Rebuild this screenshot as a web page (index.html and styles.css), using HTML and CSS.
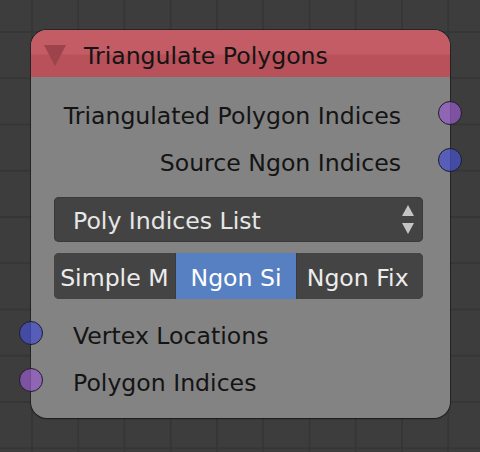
FILE: index.html
```html
<!DOCTYPE html>
<html>
<head>
<meta charset="utf-8">
<link rel="stylesheet" href="styles.css">
</head>
<body>
<div class="canvas">
  <div class="node">
    <div class="header">
      <svg class="collapse" width="24" height="24" viewBox="0 0 24 24"><polygon points="1,2 23,2 12,23" fill="#9c434b"/></svg>
      <span class="title">Triangulate Polygons</span>
    </div>
    <div class="content">
      <div class="row out">
        <span>Triangulated Polygon Indices</span>
        <span class="socket right purple"></span>
      </div>
      <div class="row out">
        <span>Source Ngon Indices</span>
        <span class="socket right blue"></span>
      </div>
      <div class="dropdown">
        <span class="ddlabel">Poly Indices List</span>
        <svg class="updown" width="14" height="32" viewBox="0 0 14 32"><polygon points="7,1 13,12 1,12" fill="#c4c4c4"/><polygon points="1,19 13,19 7,30" fill="#c4c4c4"/></svg>
      </div>
      <div class="segmented">
        <span class="seg">Simple M</span>
        <span class="seg active">Ngon Si</span>
        <span class="seg last">Ngon Fix</span>
      </div>
      <div class="row in">
        <span class="socket left blue"></span>
        <span>Vertex Locations</span>
      </div>
      <div class="row in">
        <span class="socket left purple"></span>
        <span>Polygon Indices</span>
      </div>
    </div>
  </div>
</div>
</body>
</html>
```
FILE: styles.css
```css
html, body {
  margin: 0;
  padding: 0;
}
body {
  width: 480px;
  height: 452px;
  overflow: hidden;
  background-color: #3d3d3d;
  background-image:
    linear-gradient(90deg, #363636 0 2px, transparent 2px),
    linear-gradient(180deg, #363636 0 2px, transparent 2px);
  background-size: 46.25px 46.25px;
  background-position: 31px 31px;
  font-family: "DejaVu Sans", "Liberation Sans", sans-serif;
  font-size: 23.6px;
}
.canvas {
  padding: 30px 0 0 31px;
}
.node {
  width: 419px;
  height: 388px;
  border-radius: 16px;
  background: #838383;
  box-shadow: 0 0 0 1px rgba(0,0,0,0.35), 0 1px 2px rgba(0,0,0,0.3);
  display: flex;
  flex-direction: column;
  position: relative;
}
.header {
  height: 47px;
  border-radius: 16px 16px 0 0;
  background: linear-gradient(180deg, #c35c64 0, #c35c64 24px, #b8515a 25px, #b8515a 100%);
  display: flex;
  align-items: center;
  color: #141414;
}
.collapse {
  margin-left: 12px;
  margin-top: 2px;
}
.title {
  margin-left: 17px;
  margin-top: 5px;
}
.content {
  display: flex;
  flex-direction: column;
  padding-top: 15px;
  color: #141414;
}
.row {
  height: 47px;
  display: flex;
  align-items: center;
  position: relative;
}
.row.out {
  justify-content: flex-end;
  padding-right: 49px;
}
.row.in {
  padding-left: 42px;
}
.socket {
  position: absolute;
  width: 22px;
  height: 22px;
  border-radius: 50%;
  border: 1px solid #1e1e2a;
  top: calc(50% - 15px);
}
.socket.right { right: -12px; }
.socket.left { left: -12px; }
.socket.purple { background: rgba(150, 90, 200, 0.72); }
.socket.blue { background: rgba(70, 80, 205, 0.72); }
.dropdown {
  margin: 11px 27px 0 23px;
  height: 45px;
  background: #434343;
  border-radius: 5px;
  box-shadow: inset 0 0 0 1px #3a3a3a;
  display: flex;
  align-items: center;
  justify-content: space-between;
  color: #e6e6e6;
  padding: 0 8px 0 19px;
}
.ddlabel {
  padding-top: 3px;
}
.updown {
  display: block;
}
.segmented {
  margin: 11px 27px 13px 23px;
  height: 46px;
  display: flex;
  border-radius: 5px;
  overflow: hidden;
  background: #3a3a3a;
  gap: 1px;
}
.seg {
  flex: 1;
  background: #444444;
  color: #ececec;
  display: flex;
  align-items: center;
  justify-content: center;
  white-space: nowrap;
  padding-top: 3px;
}
.seg.last {
  padding-right: 5px;
}
.seg.active {
  background: #5680c2;
  color: #ffffff;
}
```
